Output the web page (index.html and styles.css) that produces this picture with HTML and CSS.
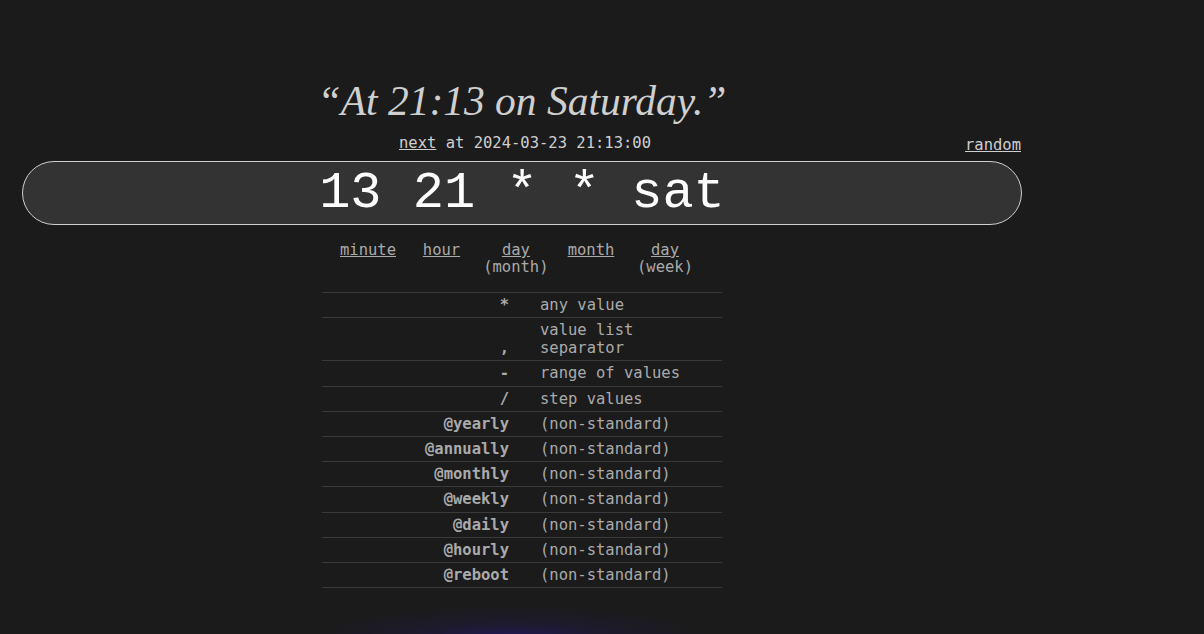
FILE: index.html
```html
<!DOCTYPE html>
<html lang="en">
<head>
<meta charset="utf-8">
<title>Crontab guru</title>
<link rel="stylesheet" href="styles.css">
</head>
<body>
<div class="glow"></div>
<main class="wrap">
  <div class="human">“At 21:13 on Saturday.”</div>
  <div class="nextline">
    <div class="next"><a href="#">next</a> at 2024-03-23 21:13:00</div>
    <a class="random" href="#">random</a>
  </div>
  <div class="cron">13 21 * * sat</div>
  <div class="column">
    <div class="fields">
      <div class="field"><a href="#">minute</a></div>
      <div class="field"><a href="#">hour</a></div>
      <div class="field"><a href="#">day</a><br>(month)</div>
      <div class="field"><a href="#">month</a></div>
      <div class="field"><a href="#">day</a><br>(week)</div>
    </div>
    <table class="help">
      <colgroup><col class="c1"><col class="c2"></colgroup>
      <tr><th>*</th><td>any value</td></tr>
      <tr><th>,</th><td>value list separator</td></tr>
      <tr><th>-</th><td>range of values</td></tr>
      <tr><th>/</th><td>step values</td></tr>
      <tr><th>@yearly</th><td>(non-standard)</td></tr>
      <tr><th>@annually</th><td>(non-standard)</td></tr>
      <tr><th>@monthly</th><td>(non-standard)</td></tr>
      <tr><th>@weekly</th><td>(non-standard)</td></tr>
      <tr><th>@daily</th><td>(non-standard)</td></tr>
      <tr><th>@hourly</th><td>(non-standard)</td></tr>
      <tr><th>@reboot</th><td>(non-standard)</td></tr>
    </table>
  </div>
</main>
</body>
</html>
```
FILE: styles.css
```css
html, body {
  margin: 0;
  padding: 0;
  background: #1b1b1b;
  height: 100%;
  overflow: hidden;
}
body {
  font-family: "DejaVu Sans Mono", monospace;
  font-size: 15.5px;
  color: #aaa;
  position: relative;
}
a {
  color: inherit;
  text-decoration: underline;
}
.glow {
  position: absolute;
  left: 310px;
  top: 606px;
  width: 400px;
  height: 64px;
  background: radial-gradient(ellipse 50% 50% at 50% 50%, rgba(34, 24, 95, 0.85), rgba(32, 26, 70, 0.45) 45%, rgba(27, 27, 27, 0) 100%);
  pointer-events: none;
}
.wrap {
  position: relative;
  width: 1000px;
  margin-left: 22px;
  padding-top: 74px;
}
.human {
  font-family: "Liberation Serif", serif;
  font-style: italic;
  font-size: 41.5px;
  color: #cfcfcf;
  text-align: center;
  line-height: 54px;
}
.nextline {
  position: relative;
  height: 31px;
  margin-top: 2px;
}
.next {
  text-align: center;
  color: #cfcfcf;
  line-height: 26px;
  padding-left: 6px;
}
.random {
  position: absolute;
  right: 1px;
  top: 2px;
  color: #cfcfcf;
  line-height: 26px;
}
.cron {
  box-sizing: border-box;
  height: 64px;
  border: 1px solid #cfcfcf;
  border-radius: 32px;
  background: #333;
  color: #fff;
  font-family: "Liberation Mono", monospace;
  font-size: 52px;
  line-height: 61px;
  padding-top: 1px;
  text-align: center;
  overflow: hidden;
}
.column {
  width: 400px;
  margin: 0 auto;
}
.fields {
  display: grid;
  grid-template-columns: 73.5px 73.5px 75.25px 75px 73px;
  padding: 17px 0 0 9.25px;
  line-height: 17px;
  height: 55px;
  box-sizing: border-box;
  text-align: center;
}
.help {
  width: 400px;
  border-collapse: collapse;
  table-layout: fixed;
  margin-top: 12px;
}
.help col.c1 { width: 202px; }
.help col.c2 { width: 198px; }
.help tr {
  border-top: 1px solid #3a3a3a;
  border-bottom: 1px solid #3a3a3a;
}
.help th, .help td {
  padding: 3.1px 0 3.1px 0;
  line-height: 18px;
  vertical-align: bottom;
}
.help th {
  text-align: right;
  padding-right: 15px;
  font-weight: bold;
}
.help td {
  padding-left: 16px;
  padding-right: 12px;
}
```
